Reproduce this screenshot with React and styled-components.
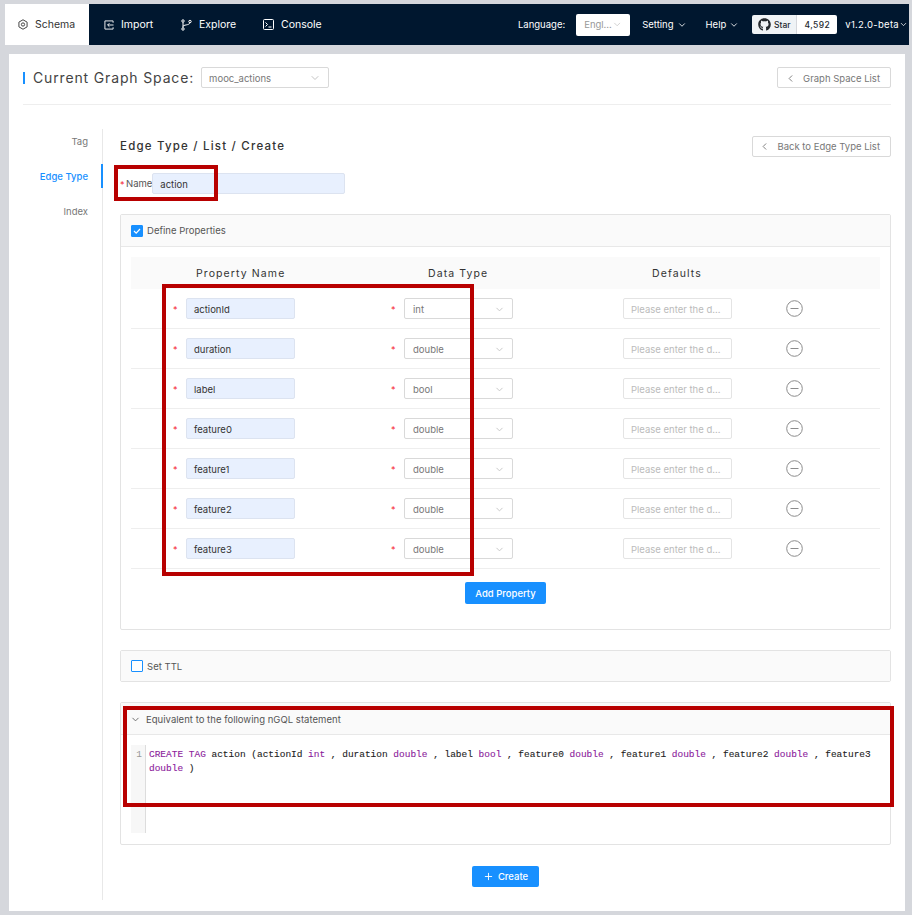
import React from 'react';
import styled, { createGlobalStyle } from 'styled-components';
import { FaGithub } from 'react-icons/fa';
import { FiChevronDown, FiChevronLeft, FiPlus } from 'react-icons/fi';

const GlobalStyle = createGlobalStyle`
  html, body {
    margin: 0;
    padding: 0;
    background: #fff;
  }
  body {
    font-family: Inter, "Noto Sans", sans-serif;
    -webkit-font-smoothing: antialiased;
  }
  * {
    box-sizing: border-box;
  }
`;

const Shell = styled.div`
  position: relative;
  width: 912px;
  height: 915px;
  padding: 4px 3px 0 5px;
  background: #d5d7dc;
`;

const Nav = styled.nav`
  display: flex;
  align-items: center;
  height: 41px;
  background: #00172f;
  color: #fff;
  font-size: 10.5px;
`;

const NavTab = styled.div`
  display: flex;
  align-items: center;
  height: 100%;
  gap: 7px;
  padding-left: ${(p) => p.$left}px;
  width: ${(p) => p.$width}px;
  background: ${(p) => (p.$active ? '#fff' : 'transparent')};
  color: ${(p) => (p.$active ? '#333' : '#fff')};
`;

const NavRight = styled.div`
  display: flex;
  align-items: center;
  margin-left: auto;
  padding-right: 1px;
  font-size: 9.5px;
`;

const LangSelect = styled.div`
  display: flex;
  align-items: center;
  justify-content: space-between;
  width: 54px;
  height: 22px;
  margin: 0 12px 0 11px;
  padding: 0 8px;
  border-radius: 2px;
  background: #fff;
  color: #999;

  svg {
    color: #ccc;
  }
`;

const NavMenu = styled.div`
  display: flex;
  align-items: center;
  gap: 3px;
  margin-right: ${(p) => p.$gap}px;
`;

const VersionMenu = styled.div`
  display: flex;
  align-items: center;
  letter-spacing: 0.3px;
`;

const StarBadge = styled.div`
  display: flex;
  height: 19px;
  width: 85px;
  margin-right: 8px;
  border-radius: 2px;
  overflow: hidden;
  font-size: 8.5px;
  font-weight: 500;
  color: #24292e;
`;

const StarLabel = styled.div`
  display: flex;
  align-items: center;
  justify-content: center;
  gap: 3px;
  width: 45px;
  background: #eff3f6;
  border-right: 1px solid #d5d7dc;
`;

const StarCount = styled.div`
  flex: 1;
  display: flex;
  align-items: center;
  justify-content: center;
  background: #fff;
  letter-spacing: 0.4px;
`;

const Content = styled.main`
  height: 857px;
  margin: 9px 4px 0;
  padding: 13px 14px 0;
  background: #fff;
`;

const SpaceBar = styled.header`
  display: flex;
  align-items: center;
  padding-bottom: 16px;
  border-bottom: 1px solid #eee;
`;

const SpaceTitle = styled.h1`
  margin: 0 7px 0 0;
  padding-left: 8px;
  border-left: 2px solid #1890ff;
  font-size: 14px;
  line-height: 12px;
  font-weight: 400;
  letter-spacing: 0.85px;
  color: #444;
`;

const Select = styled.div`
  display: flex;
  align-items: center;
  justify-content: space-between;
  width: ${(p) => p.$width}px;
  height: 21px;
  padding: 1px 7px 0 8px;
  border: 1px solid #d9d9d9;
  border-radius: 2px;
  background: #fff;
  color: #777;
  font-size: 9.5px;

  svg {
    color: #c4c4c4;
  }
`;

const SpaceSelect = styled(Select)`
  padding-left: 7px;
`;

const GhostButton = styled.div`
  display: flex;
  align-items: center;
  justify-content: flex-end;
  gap: 7px;
  width: ${(p) => p.$width}px;
  height: 21px;
  margin-left: auto;
  padding: 1px 10px 0 0;
  border: 1px solid #d9d9d9;
  border-radius: 2px;
  color: #777;
  font-size: 9.5px;
`;

const Body = styled.div`
  display: flex;
  margin-top: 24px;
`;

const Sidebar = styled.aside`
  flex: none;
  width: 80px;
  height: 771px;
  border-right: 1px solid #e8e8e8;
`;

const SideItem = styled.div`
  position: relative;
  height: 24px;
  margin: 0 -1px 11px 0;
  padding-right: 13px;
  border-right: 2px solid ${(p) => (p.$active ? '#1890ff' : 'transparent')};
  text-align: right;
  font-size: 9.5px;
  line-height: 26px;
  color: ${(p) => (p.$active ? '#1890ff' : '#777')};
  font-weight: ${(p) => (p.$active ? 500 : 400)};
`;

const Main = styled.section`
  flex: 1;
  min-width: 0;
  padding: 7px 0 0 17px;
`;

const TitleRow = styled.div`
  display: flex;
  align-items: center;
  height: 20px;
`;

const PageTitle = styled.h2`
  margin: 0;
  font-size: 11.5px;
  font-weight: 500;
  letter-spacing: 1.2px;
  color: #333;
`;

const NameRow = styled.div`
  display: flex;
  align-items: center;
  margin: 17px 0 20px;
  font-size: 9.5px;
  color: #555;
`;

const Star = styled.span`
  flex: none;
  width: ${(p) => p.$width}px;
  padding-left: ${(p) => p.$indent}px;
  padding-top: 1px;
  color: #f5222d;
  font-size: 9px;
`;

const TextInput = styled.div`
  flex: none;
  width: ${(p) => p.$width}px;
  height: 21px;
  padding: 0 7px;
  border: 1px solid ${(p) => (p.$filled ? '#dce3f0' : '#e4e4e4')};
  border-radius: 2px;
  background: ${(p) => (p.$filled ? '#e8f0fe' : '#fff')};
  color: ${(p) => (p.$filled ? '#333' : '#bbb')};
  font-size: 9.5px;
  line-height: 21px;
  white-space: nowrap;
`;

const Panel = styled.div`
  margin-bottom: ${(p) => p.$gap || 0}px;
  border: 1px solid #e3e3e3;
  border-radius: 2px;
  background: #fff;
`;

const PanelHead = styled.div`
  display: flex;
  align-items: center;
  gap: 4px;
  height: ${(p) => p.$height}px;
  padding-left: 10px;
  background: #fafafa;
  border-bottom: ${(p) => (p.$bare ? 'none' : '1px solid #e8e8e8')};
  font-size: 9.5px;
  letter-spacing: 0.03px;
  color: #555;
`;

const StatementHead = styled(PanelHead)`
  padding-top: 1px;
  gap: 5px;
`;

const HeadChevron = styled(FiChevronDown)`
  margin-left: -1px;
  color: #666;
`;

const Checkbox = styled.span`
  display: flex;
  align-items: center;
  justify-content: center;
  width: 12px;
  height: 12px;
  border: 1px solid #1890ff;
  border-radius: 1px;
  background: ${(p) => (p.$checked ? '#1890ff' : '#fff')};
`;

const TableWrap = styled.div`
  padding: 10px 10px 25px;
`;

const TableRow = styled.div`
  display: grid;
  grid-template-columns: 259px 233px 163px 1fr;
  height: ${(p) => (p.$head ? 32 : 40)}px;
  background: ${(p) => (p.$head ? '#fafafa' : 'transparent')};
  border-bottom: ${(p) => (p.$head ? 'none' : '1px solid #eee')};
`;

const HeadCell = styled.div`
  padding-left: ${(p) => p.$indent}px;
  font-size: 10.5px;
  line-height: 33px;
  letter-spacing: 1.1px;
  color: #333;
`;

const Cell = styled.div`
  display: flex;
  align-items: flex-start;
  padding-top: 9px;
  padding-left: ${(p) => p.$indent || 0}px;
  line-height: 21px;
`;

const ActionIcon = styled.svg`
  display: block;
  margin-top: 2px;
`;

const PrimaryButton = styled.div`
  display: flex;
  align-items: center;
  justify-content: center;
  gap: 4px;
  width: ${(p) => p.$width}px;
  height: ${(p) => p.$height}px;
  margin: ${(p) => p.$margin};
  border-radius: 2px;
  background: #1890ff;
  color: #fff;
  font-size: 9.5px;
  font-weight: 500;
`;

const CodeArea = styled.div`
  display: flex;
  height: 88px;
  margin: 10px 10px 11px;
`;

const Gutter = styled.div`
  flex: none;
  width: 15px;
  padding: 3px 3px 0 0;
  background: #f7f7f7;
  border-right: 1px solid #ddd;
  text-align: right;
  color: #999;
  font: 9.47px/13.5px "Liberation Mono", monospace;
`;

const Code = styled.pre`
  flex: 1;
  min-width: 0;
  margin: 0;
  padding: 3px 0 0 3px;
  font: 9.47px/13.5px "Liberation Mono", monospace;
  color: #222;
  white-space: pre-wrap;
  -webkit-text-stroke: 0.1px currentColor;
`;

const Keyword = styled.span`
  color: #8b1a9b;
`;

// annotation boxes drawn on top of the screenshot
const RedBox = styled.div`
  position: absolute;
  left: ${(p) => p.$x}px;
  top: ${(p) => p.$y}px;
  width: ${(p) => p.$w}px;
  height: ${(p) => p.$h}px;
  border: 4px solid #b80000;
  pointer-events: none;
`;

const SchemaIcon = () => (
  <svg width="10" height="11" viewBox="0 0 11 12" fill="none" stroke="#444" strokeWidth="1.1">
    <path d="M5.5 .8 10 3.4v5.2l-4.5 2.6L1 8.6V3.4z" />
    <circle cx="5.5" cy="6" r="1.8" />
  </svg>
);

const ImportIcon = () => (
  <svg width="10" height="10" viewBox="0 0 11 11" fill="none" stroke="#fff" strokeWidth="1">
    <path d="M10 3V1H1v9h9V8" />
    <path d="M10.5 5.5H4M6 3.5l-2 2 2 2" />
  </svg>
);

const ExploreIcon = () => (
  <svg width="11" height="12" viewBox="0 0 11 12" fill="none" stroke="#fff" strokeWidth="1">
    <circle cx="2" cy="2" r="1.2" />
    <circle cx="2" cy="10" r="1.2" />
    <circle cx="9" cy="2.5" r="1.2" />
    <path d="M2 3.2v5.6M2 7.5c0-2 6.5-1 7-3.8" />
  </svg>
);

const ConsoleIcon = () => (
  <svg width="11" height="11" viewBox="0 0 11 11" fill="none" stroke="#fff" strokeWidth="1">
    <rect x=".5" y=".5" width="10" height="10" rx="1" />
    <path d="M2.5 3.5 4.5 5.5l-2 2M5.5 8h3" />
  </svg>
);

const CheckMark = () => (
  <svg width="10" height="10" viewBox="0 0 10 10" fill="none" stroke="#fff" strokeWidth="1.2">
    <path d="M2 5 4.2 7.2 8 3" />
  </svg>
);

const MinusCircle = () => (
  <ActionIcon width="17" height="17" viewBox="0 0 17 17" fill="none" stroke="#8c8c8c" strokeWidth="1">
    <circle cx="8.5" cy="8.5" r="7.8" />
    <path d="M4.5 8.5h8" />
  </ActionIcon>
);

const rows = [
  { name: 'actionId', type: 'int' },
  { name: 'duration', type: 'double' },
  { name: 'label', type: 'bool' },
  { name: 'feature0', type: 'double' },
  { name: 'feature1', type: 'double' },
  { name: 'feature2', type: 'double' },
  { name: 'feature3', type: 'double' },
];

const App = () => {
  return (
    <>
      <GlobalStyle />
      <Shell>
        <Nav>
          <NavTab $active $width={84} $left={13}>
            <SchemaIcon />
            Schema
          </NavTab>
          <NavTab $width={92} $left={15}>
            <ImportIcon />
            Import
          </NavTab>
          <NavTab $width={82} $left={0}>
            <ExploreIcon />
            Explore
          </NavTab>
          <NavTab $width={100} $left={0}>
            <ConsoleIcon />
            Console
          </NavTab>
          <NavRight>
            Language:
            <LangSelect>
              Engl...
              <FiChevronDown size={11} />
            </LangSelect>
            <NavMenu $gap={19}>
              Setting <FiChevronDown size={10} />
            </NavMenu>
            <NavMenu $gap={13}>
              Help <FiChevronDown size={10} />
            </NavMenu>
            <StarBadge>
              <StarLabel>
                <FaGithub size={13} />
                Star
              </StarLabel>
              <StarCount>4,592</StarCount>
            </StarBadge>
            <VersionMenu>
              v1.2.0-beta
              <FiChevronDown size={9} />
            </VersionMenu>
          </NavRight>
        </Nav>
        <Content>
          <SpaceBar>
            <SpaceTitle>Current Graph Space:</SpaceTitle>
            <SpaceSelect $width={128}>
              mooc_actions
              <FiChevronDown size={12} />
            </SpaceSelect>
            <GhostButton $width={114}>
              <FiChevronLeft size={11} />
              Graph Space List
            </GhostButton>
          </SpaceBar>
          <Body>
            <Sidebar>
              <SideItem>Tag</SideItem>
              <SideItem $active>Edge Type</SideItem>
              <SideItem>Index</SideItem>
            </Sidebar>
            <Main>
              <TitleRow>
                <PageTitle>Edge Type / List / Create</PageTitle>
                <GhostButton $width={139}>
                  <FiChevronLeft size={11} />
                  Back to Edge Type List
                </GhostButton>
              </TitleRow>
              <NameRow>
                <Star $width={6} $indent={0}>*</Star>
                Name
                <TextInput $filled $width={193}>action</TextInput>
              </NameRow>
              <Panel $gap={20}>
                <PanelHead $height={32}>
                  <Checkbox $checked>
                    <CheckMark />
                  </Checkbox>
                  Define Properties
                </PanelHead>
                <TableWrap>
                  <TableRow $head>
                    <HeadCell $indent={65}>Property Name</HeadCell>
                    <HeadCell $indent={38}>Data Type</HeadCell>
                    <HeadCell $indent={29}>Defaults</HeadCell>
                    <HeadCell />
                  </TableRow>
                  {rows.map((row) => (
                    <TableRow key={row.name}>
                      <Cell $indent={41}>
                        <Star $width={14} $indent={1}>*</Star>
                        <TextInput $filled $width={109}>{row.name}</TextInput>
                      </Cell>
                      <Cell>
                        <Star $width={14} $indent={1}>*</Star>
                        <Select $width={109}>
                          {row.type}
                          <FiChevronDown size={11} />
                        </Select>
                      </Cell>
                      <Cell>
                        <TextInput $width={109}>Please enter the d...</TextInput>
                      </Cell>
                      <Cell>
                        <MinusCircle />
                      </Cell>
                    </TableRow>
                  ))}
                  <PrimaryButton $width={81} $height={22} $margin="13px 0 0 334px">
                    Add Property
                  </PrimaryButton>
                </TableWrap>
              </Panel>
              <Panel $gap={20}>
                <PanelHead $height={30} $bare>
                  <Checkbox />
                  Set TTL
                </PanelHead>
              </Panel>
              <Panel>
                <StatementHead $height={32}>
                  <HeadChevron size={11} />
                  Equivalent to the following nGQL statement
                </StatementHead>
                <CodeArea>
                  <Gutter>1</Gutter>
                  <Code>
                    <Keyword>CREATE TAG</Keyword> action (actionId <Keyword>int</Keyword> , duration{' '}
                    <Keyword>double</Keyword> , label <Keyword>bool</Keyword> , feature0{' '}
                    <Keyword>double</Keyword> , feature1 <Keyword>double</Keyword> , feature2{' '}
                    <Keyword>double</Keyword> , feature3 <Keyword>double</Keyword> )
                  </Code>
                </CodeArea>
              </Panel>
              <PrimaryButton $width={67} $height={21} $margin="21px 0 0 352px">
                <FiPlus size={11} />
                Create
              </PrimaryButton>
            </Main>
          </Body>
        </Content>
        <RedBox $x={114} $y={165} $w={104} $h={36} />
        <RedBox $x={162} $y={284} $w={312} $h={292} />
        <RedBox $x={123} $y={706} $w={771} $h={101} />
      </Shell>
    </>
  );
};

export default App;
